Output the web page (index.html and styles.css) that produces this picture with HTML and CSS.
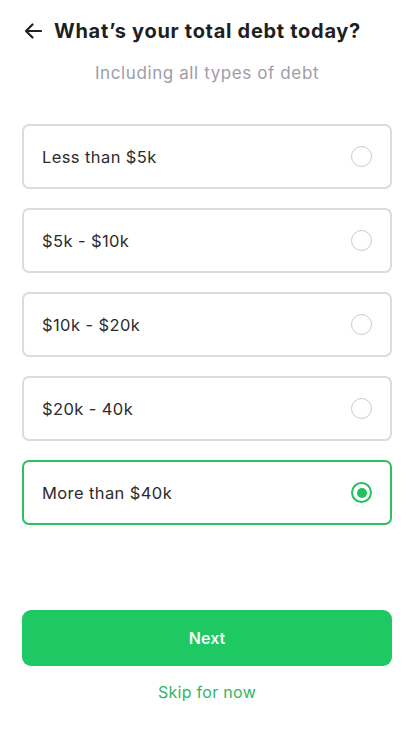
FILE: index.html
```html
<!DOCTYPE html>
<html lang="en">
<head>
<meta charset="utf-8">
<title>Total debt</title>
<link rel="stylesheet" href="styles.css">
</head>
<body>
<div class="page">
  <header class="header">
    <svg class="back" width="18" height="16" viewBox="0 0 18 16" aria-hidden="true">
      <path d="M17 8H2M8.5 1.5L2 8l6.5 6.5" fill="none" stroke="#222" stroke-width="2.2" stroke-linecap="round" stroke-linejoin="round"/>
    </svg>
    <h1 class="title">What’s your total debt today?</h1>
  </header>
  <p class="subtitle">Including all types of debt</p>
  <div class="options">
    <label class="option"><span class="label">Less than $5k</span><span class="radio"></span></label>
    <label class="option"><span class="label">$5k - $10k</span><span class="radio"></span></label>
    <label class="option"><span class="label">$10k - $20k</span><span class="radio"></span></label>
    <label class="option"><span class="label">$20k - 40k</span><span class="radio"></span></label>
    <label class="option selected"><span class="label">More than $40k</span><span class="radio"></span></label>
  </div>
  <button class="next">Next</button>
  <a class="skip">Skip for now</a>
</div>
</body>
</html>
```
FILE: styles.css
```css
* { box-sizing: border-box; }
html, body { margin: 0; background: #fff; }
body { font-family: "Inter", "Noto Sans", sans-serif; color: #222; }
.page { padding: 0 22px; display: flex; flex-direction: column; }
.header { display: flex; align-items: center; height: 62px; padding-left: 2px; }
.back { margin-right: 12px; flex: none; }
.title { margin: 0; font-size: 20px; font-weight: 700; color: #1f1f1f; letter-spacing: 0.7px; }
.subtitle { margin: 0; text-align: center; font-size: 17px; color: #9d9ca8; line-height: 22px; letter-spacing: 0.6px; }
.options { margin-top: 40px; display: flex; flex-direction: column; gap: 19px; }
.option { height: 65px; border: 2px solid #dcdcdc; border-radius: 7px; display: flex; align-items: center; justify-content: space-between; padding: 0 18px 0 18px; }
.label { font-size: 16.5px; color: #2c2c2c; letter-spacing: 0.4px; }
.radio { width: 21px; height: 21px; border-radius: 50%; border: 1.5px solid #c9c9c9; display: flex; align-items: center; justify-content: center; }
.option.selected { border-color: #2cc061; }
.option.selected .radio { border: 2.5px solid #22c35e; }
.option.selected .radio::after { content: ""; width: 10px; height: 10px; border-radius: 50%; background: #1fc35b; }
.next { margin-top: 85px; height: 56px; border: 0; border-radius: 9px; background: #1ec863; color: #f4fff7; font-family: inherit; font-size: 16px; font-weight: 600; }
.skip { margin-top: 16px; text-align: center; font-size: 16px; color: #32b564; letter-spacing: 0.3px; }
```
